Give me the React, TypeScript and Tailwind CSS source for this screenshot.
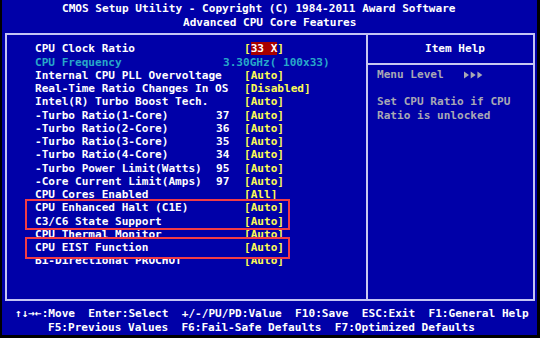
type Row = {
  label: string;
  num?: string;
  value?: string;
  kind?: "clock" | "freq";
};

const rows: Row[] = [
  { label: "CPU Clock Ratio", kind: "clock" },
  { label: "CPU Frequency", kind: "freq", value: "3.30GHz( 100x33)" },
  { label: "Internal CPU PLL Overvoltage", value: "[Auto]" },
  { label: "Real-Time Ratio Changes In OS", value: "[Disabled]" },
  { label: "Intel(R) Turbo Boost Tech.", value: "[Auto]" },
  { label: "-Turbo Ratio(1-Core)", num: "37", value: "[Auto]" },
  { label: "-Turbo Ratio(2-Core)", num: "36", value: "[Auto]" },
  { label: "-Turbo Ratio(3-Core)", num: "35", value: "[Auto]" },
  { label: "-Turbo Ratio(4-Core)", num: "34", value: "[Auto]" },
  { label: "-Turbo Power Limit(Watts)", num: "95", value: "[Auto]" },
  { label: "-Core Current Limit(Amps)", num: "97", value: "[Auto]" },
  { label: "CPU Cores Enabled", value: "[All]" },
  { label: "CPU Enhanced Halt (C1E)", value: "[Auto]" },
  { label: "C3/C6 State Support", value: "[Auto]" },
  { label: "CPU Thermal Monitor", value: "[Auto]" },
  { label: "CPU EIST Function", value: "[Auto]" },
  { label: "Bi-Directional PROCHOT", value: "[Auto]" },
];

function SetupRow({ row }: { row: Row }) {
  if (row.kind === "freq") {
    return (
      <div className="flex h-[13.25px] items-center whitespace-pre text-[#28a8c8]">
        <span className="w-[188px] shrink-0">{row.label}</span>
        <span>{row.value}</span>
      </div>
    );
  }
  return (
    <div className="flex h-[13.25px] items-center whitespace-pre">
      <span className="w-[181px] shrink-0 text-white">{row.label}</span>
      <span className="w-[28px] shrink-0 text-white">{row.num ?? ""}</span>
      {row.kind === "clock" ? (
        <span className="text-[#fcfc54]">
          [<span className="bg-[#a80000] text-white">33 X</span>]
        </span>
      ) : (
        <span className="text-[#fcfc54]">{row.value}</span>
      )}
    </div>
  );
}

// three small solid arrowheads next to "Menu Level"
function Arrows() {
  return (
    <svg width="20" height="8" viewBox="0 0 20 8" className="inline-block align-[-0px]">
      <path d="M1 0.5 L6 4 L1 7.5 Z M7.7 0.5 L12.7 4 L7.7 7.5 Z M14.4 0.5 L19.4 4 L14.4 7.5 Z" fill="#a8a8b4" />
    </svg>
  );
}

function App() {
  const before = rows.slice(0, 12);
  const pair = rows.slice(12, 14);
  const thermal = rows[14];
  const eist = rows[15];
  const last = rows[16];

  return (
    <div
      className="w-[540px] h-[338px] bg-black overflow-hidden font-bold text-[11.08px] leading-[13.5px]"
      style={{ fontFamily: '"DejaVu Sans Mono", "Liberation Mono", monospace' }}
    >
      <div className="ml-[2px] w-[535px] h-[335px] bg-[#0000a8] flex flex-col">
        <div className="pt-[2px] text-white whitespace-pre">
          <div className="pl-[60px] h-[13.5px]">CMOS Setup Utility - Copyright (C) 1984-2011 Award Software</div>
          <div className="pl-[181px] h-[13.5px]">Advanced CPU Core Features</div>
        </div>

        <div className="mt-[4px] ml-[3px] w-[530px] h-[268px] border-2 border-[#c4c4f4] flex">
          <div className="w-[359px] pl-[28px] pt-[7.4px]">
            {before.map((r) => (
              <SetupRow key={r.label} row={r} />
            ))}
            <div className="relative z-10">
              <span className="absolute -z-10 left-[-10px] w-[265px] top-[-2.6px] bottom-[-1.8px] bg-[#0000a8] border-2 border-[#f23c46]" />
              {pair.map((r) => (
                <SetupRow key={r.label} row={r} />
              ))}
            </div>
            <SetupRow row={thermal} />
            <div className="relative z-10">
              <span className="absolute -z-10 left-[-10px] w-[265px] top-[-4.4px] bottom-[-4.3px] bg-[#0000a8] border-2 border-[#f23c46]" />
              <SetupRow row={eist} />
            </div>
            <SetupRow row={last} />
          </div>

          <div className="w-[2px] bg-[#c8c8f0]" />

          <div className="flex-1 flex flex-col">
            <div className="h-[28px] flex items-center pl-[57px] text-white">Item Help</div>
            <div className="h-[2px] bg-[#c8c8f0]" />
            <div className="pl-[9px] pt-[3px] text-[#a8a8b4] whitespace-pre">
              <div className="h-[13.5px] flex items-center">
                <span className="w-[86px]">Menu Level</span>
                <Arrows />
              </div>
              <div className="h-[13.5px]" />
              <div className="h-[13.5px]">Set CPU Ratio if CPU</div>
              <div className="h-[13.5px]">Ratio is unlocked</div>
            </div>
          </div>
        </div>

        <div className="pt-[6px] text-white whitespace-pre">
          <div className="pl-[13px] h-[13.5px]">↑↓→←:Move  Enter:Select  +/-/PU/PD:Value  F10:Save  ESC:Exit  F1:General Help</div>
          <div className="pl-[46px] h-[13.5px]">F5:Previous Values  F6:Fail-Safe Defaults  F7:Optimized Defaults</div>
        </div>
      </div>
    </div>
  );
}

export default App;
